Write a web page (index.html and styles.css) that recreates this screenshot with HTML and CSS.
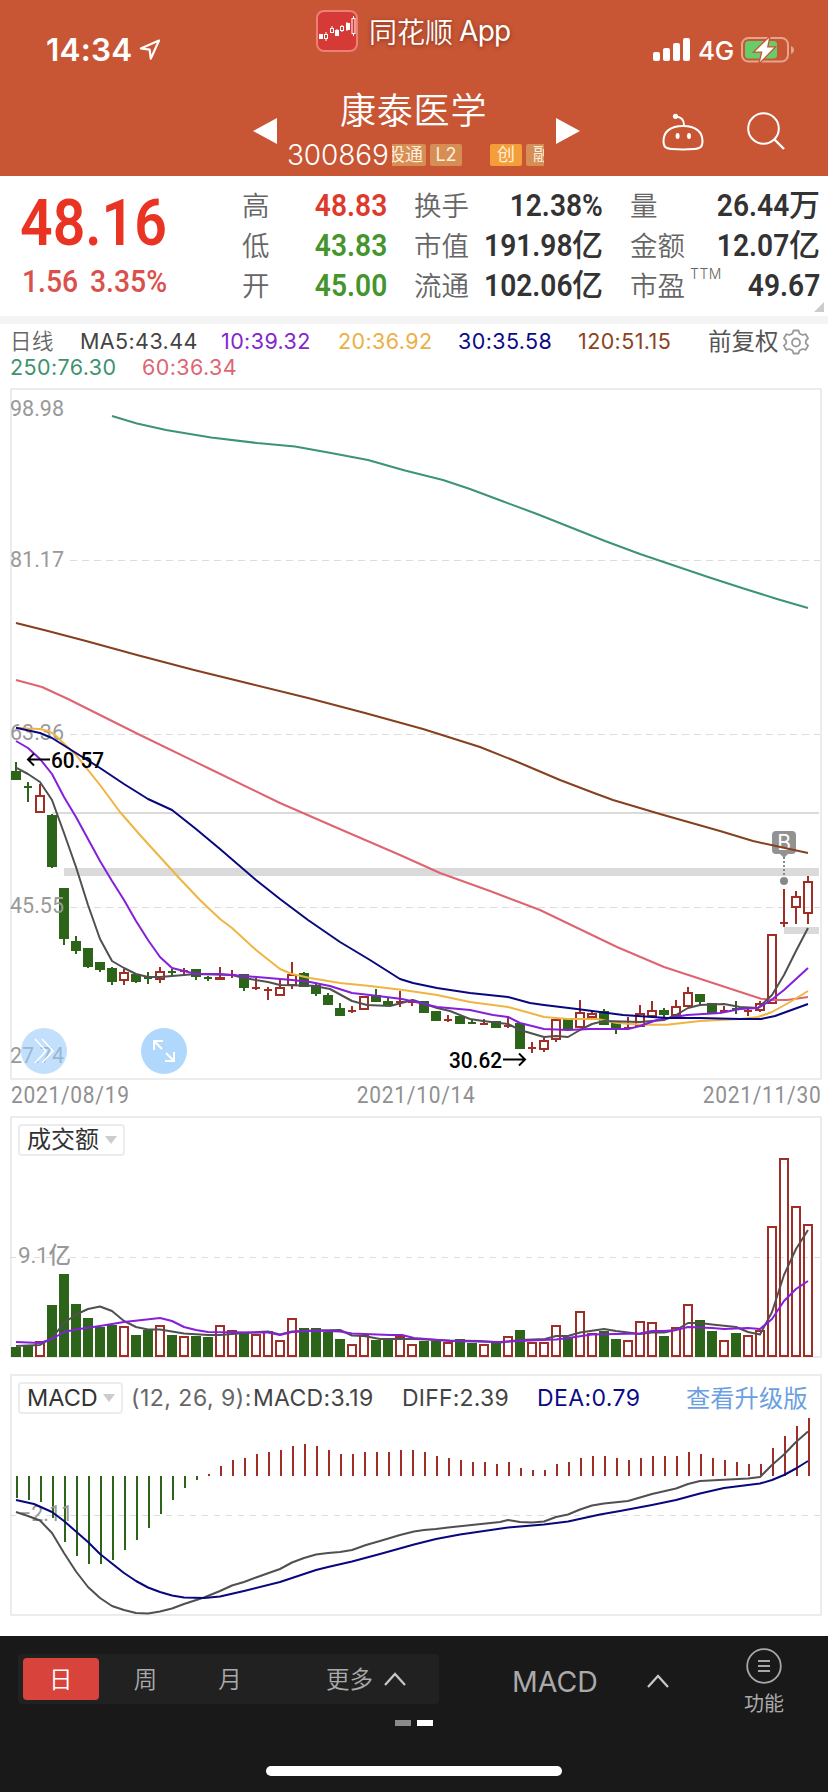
FILE: index.html
```html
<!DOCTYPE html>
<html lang="zh-CN">
<head>
<meta charset="utf-8">
<title>康泰医学 300869</title>
<link rel="stylesheet" href="styles.css">
</head>
<body>
<div class="screen">
  <header class="header">
    <div class="status">
      <div class="clock">14:34
        <svg class="locate" viewBox="0 0 22 22" width="22" height="22"><path d="M20 1.5 1.8 9.4l8.8 1.2 1.2 9z" fill="none" stroke="#fff" stroke-width="2.2" stroke-linejoin="round"/></svg>
      </div>
      <div class="brand">
        <svg viewBox="0 0 42 42" width="42" height="42">
          <rect x="1" y="1" width="40" height="40" rx="7" fill="#d63a36" stroke="#ec7f76" stroke-width="2"/>
          <g stroke="#fff" stroke-width="1" fill="#fff">
            <rect x="3.5" y="24.500" width="3" height="4"/>
            <path d="M10 22v9M16 16v7M26 15v7M31 12v9M37.500 6v20M21 19v7"/>
            <rect x="8.500" y="24.500" width="3" height="4" fill="#d63a36"/>
            <rect x="14.500" y="18.500" width="3" height="4" fill="#d63a36"/>
            <rect x="19.500" y="20.500" width="3" height="5"/>
            <rect x="24.500" y="16.500" width="3" height="4" fill="#d63a36"/>
            <rect x="30.500" y="13.500" width="3" height="6"/>
            <rect x="36" y="8.500" width="3" height="15" fill="#d63a36"/>
          </g>
        </svg>
        <span class="brand-name">同花顺</span><span class="brand-app">App</span>
      </div>
      <div class="signals">
        <svg viewBox="0 0 38 24" width="38" height="24" fill="#fff"><rect y="14" width="7" height="9" rx="2"/><rect x="10" y="10" width="7" height="13" rx="2"/><rect x="20" y="5" width="7" height="18" rx="2"/><rect x="30" width="7" height="23" rx="2"/></svg>
        <span class="net">4G</span>
        <svg viewBox="0 0 54 26" width="54" height="26"><rect x="1" y="1" width="46" height="23.500" rx="6.500" fill="none" stroke="#e2a68f" stroke-width="2"/><path d="M50 9v8c4-1.500 4-6.500 0-8z" fill="#e2a68f"/><rect x="4" y="4" width="32" height="17.500" rx="3.500" fill="#66ce68"/><path d="M28 1 14 14.500h7.500L19 25 33 10.500h-7z" fill="#fff" stroke="#c85634" stroke-width="2.600" paint-order="stroke"/></svg>
      </div>
    </div>
    <div class="titlebar">
      <svg class="back" viewBox="0 0 24 42" width="24" height="42"><path d="M22 2 2 21l20 19" fill="none" stroke="#fff" stroke-width="2"/></svg>
      <svg class="prev" viewBox="0 0 24 26" width="24" height="26"><path d="M24 0v26L0 13z" fill="#fff"/></svg>
      <div class="stock">
        <div class="stock-name">康泰医学</div>
        <div class="stock-meta"><span class="code">300869</span>
          <div class="tags"><div class="tag tag-cut">股通</div><div class="tag">L2</div><div class="tag tag-hot">创</div><div class="tag tag-end">融</div></div>
        </div>
      </div>
      <svg class="next" viewBox="0 0 24 26" width="24" height="26"><path d="M0 0v26l24-13z" fill="#fff"/></svg>
      <svg class="robot" viewBox="0 0 42 38" width="42" height="38"><path d="M21 13c13 0 19.500 6 19.500 15 0 6-2 7.500-8 8-7 .6-16 .6-23 0-6-.5-8-2-8-8 0-9 6.500-15 19.500-15z" fill="none" stroke="#fff" stroke-width="2"/><path d="M22 12c0-6-3-8-8-8.500" fill="none" stroke="#fff" stroke-width="1.800"/><circle cx="13.500" cy="3.300" r="2.600" fill="#fff"/><ellipse cx="15.600" cy="23" rx="2" ry="3" fill="#fff"/><ellipse cx="27" cy="23" rx="2" ry="3" fill="#fff"/></svg>
      <svg class="search" viewBox="0 0 38 38" width="38" height="38"><circle cx="16.500" cy="16.500" r="15.300" fill="none" stroke="#fff" stroke-width="2"/><path d="m27.500 27.500 9.500 9.500" stroke="#fff" stroke-width="2.400"/></svg>
    </div>
  </header>

  <section class="quote">
    <div class="price-block">
      <div class="price"><span class="din-l">48.16</span></div>
      <div class="change"><span class="din-l">1.56</span><span class="din-l">3.35%</span></div>
    </div>
    <div class="facts">
      <span>高</span><b class="up"><i>48.83</i></b><span>换手</span><b><i>12.38%</i></b><span>量</span><b><i>26.44</i>万</b>
      <span>低</span><b class="down"><i>43.83</i></b><span>市值</span><b><i>191.98</i>亿</b><span>金额</span><b><i>12.07</i>亿</b>
      <span>开</span><b class="down"><i>45.00</i></b><span>流通</span><b><i>102.06</i>亿</b><span class="pe">市盈<sup>TTM</sup></span><b><i>49.67</i></b>
    </div>
    <div class="corner"></div>
  </section>

  <section class="ma">
    <div class="ma-row">
      <span class="c-day">日线</span><span class="c5">MA5:43.44</span><span class="c10">10:39.32</span><span class="c20">20:36.92</span><span class="c30">30:35.58</span><span class="c120">120:51.15</span><span class="adj">前复权</span>
      <svg viewBox="-13 -13 26 26" width="26" height="26"><path d="M-2.500-11.500h5l1 3 3 1.500 3.200-.8 2.400 4.200-2.300 2.300v2.600l2.300 2.300-2.400 4.200-3.200-.8-3 1.500-1 3h-5l-1-3-3-1.500-3.200.8-2.400-4.200 2.300-2.300v-2.600l-2.300-2.300 2.400-4.200 3.200.8 3-1.500z" fill="none" stroke="#999" stroke-width="1.800" stroke-linejoin="round"/><circle r="4" cy=".5" fill="none" stroke="#999" stroke-width="1.800"/></svg>
    </div>
    <div class="ma-row ma-row2"><span class="c250">250:76.30</span><span class="c60">60:36.34</span></div>
  </section>

  <svg class="plot" id="kline" viewBox="0 388 828 692" width="828" height="692">
    <rect x="11" y="389" width="810" height="690" fill="none" stroke="#ececec" stroke-width="2"/>
    <path d="M70 560.500H820M70 734.500H820M70 907.500H820" stroke="#ddd" stroke-width="1.200" stroke-dasharray="7 5"/>
    <g fill="#dadada"><rect x="52" y="812" width="767" height="2"/><rect x="64" y="868" width="755" height="8"/><rect x="784" y="927" width="35" height="7"/></g>
    <g class="bars"></g>
    <g class="axis">
      <text x="10" y="416" textLength="54" lengthAdjust="spacingAndGlyphs">98.98</text>
      <text x="10" y="567" textLength="54" lengthAdjust="spacingAndGlyphs">81.17</text>
      <text x="10" y="740" textLength="54" lengthAdjust="spacingAndGlyphs">63.36</text>
      <text x="10" y="913" textLength="54" lengthAdjust="spacingAndGlyphs">45.55</text>
      <text x="10" y="1063" textLength="54" lengthAdjust="spacingAndGlyphs">27.74</text>
    </g>
    <g><path d="M776 831h16a4 4 0 0 1 4 4v15a4 4 0 0 1-4 4h-4l-4 4-4-4h-4a4 4 0 0 1-4-4v-15a4 4 0 0 1 4-4z" fill="#929292"/><text class="mark" x="784" y="850">B</text><path d="M784 857v20" stroke="#888" stroke-width="2" stroke-dasharray="2 2"/><circle cx="784" cy="881" r="4" fill="#888"/></g>
    <g class="lines"></g>
    <g class="note">
      <text x="51" y="768" textLength="53" lengthAdjust="spacingAndGlyphs">60.57</text><path d="M50 759.500H28M34 753.500l-6 6 6 6"/>
      <text x="449" y="1068" textLength="53" lengthAdjust="spacingAndGlyphs">30.62</text><path d="M503 1059.500h22M519 1053.500l6 6-6 6"/>
    </g>
    <circle cx="44" cy="1051" r="23" fill="#9accfa" opacity=".6"/>
    <path d="m35 1039 11 12-11 12M42 1039l11 12-11 12" fill="none" stroke="#fff" stroke-width="1.500"/>
    <circle cx="164" cy="1051" r="23" fill="#b0d8fc"/>
    <path d="M154 1050v-9h9M154 1041l8 8M174 1052v9h-9M174 1061l-8-8" fill="none" stroke="#fff" stroke-width="2"/>
  </svg>
  <div class="dates"><span>2021/08/19</span><span>2021/10/14</span><span>2021/11/30</span></div>

  <section class="panel volume">
    <svg class="plot" id="volume" viewBox="0 1116 828 242" width="828" height="242">
      <rect x="11" y="1117" width="810" height="240" fill="none" stroke="#ececec" stroke-width="2"/>
      <path d="M10 1257.500H820" stroke="#ddd" stroke-width="1.200" stroke-dasharray="6 6"/>
      <g class="bars"></g>
      <text class="axis" x="18" y="1263" textLength="53">9.1亿</text>
      <g class="lines"></g>
    </svg>
    <div class="panel-head"><span class="pick">成交额<i></i></span></div>
  </section>

  <section class="panel macd">
    <svg class="plot" id="macd" viewBox="0 1374 828 242" width="828" height="242">
      <rect x="11" y="1375" width="810" height="240" fill="none" stroke="#ececec" stroke-width="2"/>
      <path d="M10 1515.500H820" stroke="#ddd" stroke-width="1.200" stroke-dasharray="6 6"/>
      <g class="bars"></g>
      <text class="axis" x="19" y="1521" textLength="54" lengthAdjust="spacingAndGlyphs">−2.11</text>
      <g class="lines"></g>
    </svg>
    <div class="panel-head"><span class="pick pick-en">MACD<i></i></span><span class="args">(12, 26, 9):</span><span class="m1">MACD:3.19</span><span class="m2">DIFF:2.39</span><span class="m3">DEA:0.79</span><a class="upgrade">查看升级版</a></div>
  </section>

  <footer class="footer">
    <div class="tools">
      <div class="periods">
        <span class="on">日</span><span>周</span><span>月</span><span class="more">更多<svg viewBox="0 0 22 14" width="22" height="14"><path d="M1 13 11 2l10 11" fill="none" stroke="#c8c8c8" stroke-width="2.200"/></svg></span>
      </div>
      <div class="indicator"><span>MACD</span><svg viewBox="0 0 22 14" width="22" height="14"><path d="M1 13 11 2l10 11" fill="none" stroke="#c8c8c8" stroke-width="2.200"/></svg></div>
      <div class="func"><svg viewBox="0 0 36 36" width="36" height="36"><circle cx="18" cy="18" r="16.800" fill="none" stroke="#a8a8a8" stroke-width="1.800"/><path d="M12 13h12M12 18h12M12 23h12" stroke="#a8a8a8" stroke-width="1.800"/></svg><span>功能</span></div>
    </div>
    <div class="pager"><i></i><i class="cur"></i></div>
    <div class="home"></div>
  </footer>
</div>
<script src="charts.js"></script>
</body>
</html>
```

FILE: styles.css
```css
* { box-sizing: border-box; }
body { margin: 0; background: #fff; font-family: Inter, "Noto Sans CJK SC", sans-serif; color: #333; }
svg { display: block; flex: none; }
i { font-style: normal; }
.screen { width: 828px; height: 1792px; display: flex; flex-direction: column; overflow: hidden; }

.header { height: 176px; background: #c85634; color: #fff; flex: none; }
.status { height: 84px; display: grid; grid-template-columns: 316px 1fr 175px; }
.clock { display: flex; align-items: center; gap: 7px; padding: 15px 0 0 46px; font-size: 31.5px; font-weight: 600; letter-spacing: .2px; }
.brand { display: flex; align-items: center; height: 42px; margin-top: 10px; }
.brand-name { margin-left: 11px; font-size: 28px; font-weight: 350; text-shadow: 0 1px 4px rgba(60, 10, 0, .5); }
.brand-app { margin-left: 6px; font-size: 28px; letter-spacing: -.7px; text-shadow: 0 1px 4px rgba(60, 10, 0, .5); }
.signals { display: flex; align-items: center; height: 26px; margin-top: 37px; }
.net { width: 50px; padding-left: 7px; font-size: 26px; letter-spacing: -.3px; font-weight: 450; }
.titlebar { height: 92px; display: grid; grid-template-columns: 44px 209px 34px 257px 12px 24px 82px 42px 43px 38px; }
.back { grid-column: 2; margin-top: 26px; }
.titlebar > svg { align-self: start; }
.prev { grid-column: 2; grid-row: 1; justify-self: end; margin: 34px -24px 0 0; }
.stock { grid-column: 4; grid-row: 1; }
.stock-name { padding-left: 53px; height: 56px; line-height: 54px; font-size: 36px; font-weight: 350; letter-spacing: .8px; white-space: nowrap; }
.stock-meta { display: flex; align-items: center; height: 30px; }
.code { width: 105px; font-size: 28px; font-weight: 350; letter-spacing: -.1px; line-height: 30px; }
.tags { width: 152px; height: 22px; display: flex; overflow: hidden; }
.tag { flex: none; width: 32px; height: 22px; line-height: 22px; margin-right: 4px; border-radius: 2px; background: #d68e54; color: #fdeedd; font-size: 18px; text-align: center; }
.tag-cut { width: 42px; margin-left: -8px; }
.tag-hot { margin-left: 24px; background: #f49e3a; }
.next { grid-column: 6; grid-row: 1; margin-top: 34px; }
.robot { grid-column: 8; grid-row: 1; margin-top: 29px; }
.search { grid-column: 10; grid-row: 1; margin-top: 28px; }

.quote { position: relative; flex: none; height: 148px; display: grid; grid-template-columns: 242px 1fr; border-bottom: 8px solid #f4f4f4; }
.price-block { font-family: Roboto, sans-serif; color: #e93323; white-space: nowrap; }
.din-l { display: inline-block; transform: scaleX(.88); transform-origin: left; }
.price { padding: 9px 0 0 20px; height: 84px; line-height: 77px; font-size: 65px; font-weight: 600; }
.change { display: grid; grid-template-columns: 68px 90px; padding-left: 22px; height: 44px; line-height: 43px; font-size: 30.5px; font-weight: 500; color: #da504b; }
.change .din-l { transform: scaleX(.93); }
.facts { display: grid; grid-template-columns: 54px 91px 27px 62px 127px 27px 92px 98px; grid-template-rows: repeat(3, 40px); padding-top: 10px; line-height: 40px; }
.facts span { font-size: 27.5px; font-weight: 350; color: #666; white-space: nowrap; }
.facts span:nth-of-type(3n+2) { grid-column: 4; }
.facts span:nth-of-type(3n) { grid-column: 7; }
.facts span:nth-of-type(3n+1) { grid-column: 1; }
.facts b { display: flex; justify-content: flex-end; font-size: 31px; font-weight: 500; color: #333; white-space: nowrap; line-height: 38px; }
.facts i { font-family: Roboto, sans-serif; font-weight: 600; font-size: 32px; line-height: 39px; transform: scaleX(.88); transform-origin: right; }
.facts .up { color: #dd3a2c; }
.facts .down { color: #45942c; }
.pe sup { font-size: 14px; line-height: 0; letter-spacing: .5px; vertical-align: 17px; margin-left: 5px; }
.corner { position: absolute; right: 4px; bottom: 4px; border-left: 10px solid transparent; border-bottom: 10px solid #ccc; }

.ma { flex: none; height: 64px; padding-top: 4px; font-size: 21.5px; letter-spacing: .4px; }
.ma-row { display: grid; grid-template-columns: 70px 141px 117px 120px 120px 130px 75px 26px; height: 27px; line-height: 27px; padding-left: 10px; align-items: center; white-space: nowrap; }
.ma-row2 { grid-template-columns: 132px 120px; height: 24px; line-height: 22px; }
.c-day { color: #666; font-weight: 350; }
.c5 { color: #444; }
.c10 { color: #8326cc; }
.c20 { color: #ebb045; }
.c30 { color: #0b0b86; }
.c120 { color: #8b4420; }
.c250 { color: #3f9271; }
.c60 { color: #dd6673; }
.adj { color: #555; font-size: 23.5px; letter-spacing: 0; }

.plot { flex: none; }
.axis { font: 450 22.5px Roboto, "Noto Sans CJK SC", sans-serif; fill: #999; }
.mark { font: 21px Inter, sans-serif; fill: #fff; text-anchor: middle; }
.note { font: 500 22px Roboto, sans-serif; fill: #000; }
.note path { fill: none; stroke: #000; stroke-width: 2; }
.dates { flex: none; height: 36px; display: flex; justify-content: space-between; padding: 0 7px 0 11px; font: 23px/32px Roboto, sans-serif; letter-spacing: .8px; color: #909090; }
.dates span { transform: scaleX(.91); }
.dates span:first-child { transform-origin: left; }
.dates span:last-child { transform-origin: right; }

.panel { flex: none; display: grid; height: 242px; }
.panel > * { grid-area: 1 / 1; }
.macd { margin-top: 16px; }
.panel-head { display: flex; align-items: center; height: 32px; margin: 8px 0 0 18px; font-size: 23px; line-height: 30px; white-space: nowrap; }
.pick { display: flex; align-items: center; justify-content: space-between; width: 107px; height: 32px; padding: 0 6px 0 7px; border: 2px solid #ececec; border-radius: 4px; font-size: 24px; line-height: 26px; color: #333; }
.pick-en { width: 105px; font-size: 23.5px; line-height: 28px; }
.pick i { border: 6px solid transparent; border-top: 8px solid #ccc; border-bottom: 0; }
.args { width: 122px; margin-left: 8px; color: #666; letter-spacing: .5px; }
.m1 { width: 149px; color: #444; letter-spacing: .3px; }
.m2 { width: 135px; color: #444; letter-spacing: .2px; }
.m3 { width: 149px; color: #0b0b86; letter-spacing: .4px; }
.upgrade { color: #6c9fe2; font-size: 24.3px; }

.footer { margin-top: 20px; flex: 1; background: #191919; color: #aaa; }
.tools { display: flex; height: 84px; }
.periods { width: 421px; height: 50px; margin: 18px 0 0 18px; padding: 4px 5px; border-radius: 4px; background: #212121; display: flex; font-size: 23.5px; font-weight: 350; line-height: 43px; text-align: center; }
.periods span { width: 77px; height: 42px; margin-right: 9px; }
.periods .on { background: #d8433c; color: #fff; border-radius: 4px; }
.periods .more { display: flex; align-items: center; gap: 11px; width: 110px; margin: 0 0 0 49px; }
.indicator { display: flex; align-items: center; height: 50px; margin: 20px 0 0 73px; font-size: 28.5px; }
.indicator span { width: 135px; }
.func { width: 60px; margin: 12px 0 0 65px; display: flex; flex-direction: column; align-items: center; font-size: 20px; line-height: 40px; }
.pager { display: flex; justify-content: center; gap: 6px; }
.pager i { width: 16px; height: 6px; background: #8a8a8a; }
.pager .cur { background: #fff; }
.home { width: 296px; height: 10px; margin: 40px auto 0; border-radius: 5px; background: #fff; }
```

FILE: charts.js
```js
const UP = '#9f2f26', DOWN = '#2c651a';
const GREY = '#505050', PURPLE = '#861fdc', NAVY = '#08087e';
const cx = i => 16 + 12 * i;

// direction, high, body top, body bottom, low, turnover top
const days = `
d 762 771 780 780 1347;d 782 786 788 802 1346;u 784 795 813 813 1341;d 814 815 867 868 1305;
d 888 888 939 945 1274;d 936 941 951 954 1304;d 948 948 967 968 1318;d 962 962 970 972 1327;
d 967 968 982 985 1325;u 969 972 981 985 1326;d 974 974 982 983 1335;d 972 977 979 984 1330;
u 967 971 980 983 1325;d 969 971 973 977 1335;u 968 970 972 974 1336;d 969 969 977 980 1336;
d 976 977 979 981 1337;u 967 977 980 980 1325;u 970 974 976 978 1330;d 974 974 988 991 1333;
u 978 987 989 990 1334;u 987 989 991 1000 1331;u 980 987 996 996 1340;u 962 974 986 989 1318;
d 972 973 987 987 1328;d 984 985 994 996 1328;d 993 995 1005 1005 1332;d 1003 1008 1016 1016 1339;
u 1006 1010 1012 1013 1344;u 996 996 1010 1010 1335;d 989 995 1002 1002 1340;d 997 1001 1006 1006 1338;
u 991 1001 1003 1007 1336;u 999 1001 1003 1006 1344;d 1001 1001 1013 1013 1341;d 1011 1011 1021 1021 1341;
u 1015 1019 1021 1022 1342;d 1016 1016 1024 1024 1339;d 1019 1022 1024 1024 1343;u 1019 1023 1025 1025 1344;
d 1021 1021 1028 1028 1343;u 1016 1025 1027 1028 1336;d 1023 1023 1049 1049 1330;u 1042 1047 1049 1053 1342;
u 1038 1040 1050 1052 1342;u 1017 1019 1040 1042 1325;d 1018 1019 1029 1031 1337;u 1000 1012 1028 1028 1311;
u 1011 1013 1018 1018 1333;d 1009 1011 1025 1025 1331;d 1022 1022 1028 1034 1339;u 1017 1027 1029 1030 1340;
u 1005 1013 1027 1027 1321;u 1001 1010 1017 1017 1322;d 1008 1010 1015 1017 1336;u 1000 1006 1016 1016 1327;
u 987 992 1007 1007 1304;d 994 994 1002 1005 1320;d 1003 1003 1013 1013 1331;u 1006 1010 1012 1012 1340;
d 1001 1008 1010 1014 1333;u 1008 1010 1012 1016 1335;u 1001 1003 1011 1012 1330;u 934 934 1004 1004 1226;
u 889 922 924 927 1158;u 891 896 908 924 1206;u 876 881 914 924 1224`
  .trim().split(';').map(s => s.trim().split(' ')).map(([d, ...n]) => [d, ...n.map(Number)]);

const macd = [1498,1500,1502,1518,1542,1556,1564,1564,1560,1550,1540,1528,1514,1500,1488,1480,
  1474,1466,1460,1458,1454,1452,1450,1446,1444,1446,1450,1454,1454,1452,1452,1452,1450,1450,
  1452,1456,1458,1460,1462,1462,1464,1462,1468,1470,1470,1464,1462,1458,1456,1456,1458,1460,
  1458,1456,1456,1456,1452,1454,1458,1460,1462,1464,1464,1448,1436,1426,1418];

const lines = {
  kline: [
    ['#3c9474', '112,416 137,423.500 166,430 211,437.500 257,443 295,446.500 331,453 368,460 405,470.500 443,480 470,489 502,501 537,514 571,527.500 605,541 640,554 674,565.500 708,577 742,588 777,599 808,608'],
    ['#de6470', '16,680 42,687 68,699 138,734 208,768 280,803 342,830 400,855 440,873 490,891 540,910 617,947 664,967 761,998.700 773,1000 787,1000 808,997'],
    ['#f0b443', '16,727.700 28,728.500 40,729 50,731.500 56,736 76,755 100,785 120,812 140,835 180,879 200,900 220,919 232,928 256,950 280,969 292,974 310,978 340,983 370,986 403,990 437,995 470,1002 508,1007 530,1013 544,1017 568,1019 597,1019 617,1023 643,1024.700 667,1024.700 700,1021 740,1019 758,1017 772,1012 790,1002 808,991'],
    [GREY, '16,767.700 28,774 40,782 52,800 64,833 76,867 88,905 100,939 112,961 124,968 136,974 148,977 160,977 172,976 196,974 232,975 244,978 268,982 280,985 313,985.700 330,989 352,1001 367,1005 390,1006 413,1000 437,1008 450,1011 470,1019 483,1021 508,1024 520,1030 544,1037 556,1036 568,1037 580,1030 592,1024 604,1021 640,1022 664,1020 676,1015 688,1008 700,1005 724,1004 740,1007 758,1008 772,995 784,975 796,951 808,928'],
    [PURPLE, '16,741 28,748 40,759 52,774 64,797 76,817 88,839 100,861 112,881 124,900 136,921 148,940 160,957 172,968 184,971 196,974 220,974 244,976 280,979 292,980 310,982 330,986 352,993 370,995 402,999 420,1003 437,1007 470,1010 493,1015 508,1017 520,1023 544,1029 568,1030 590,1029 628,1029 640,1026 657,1020 687,1015 720,1013 740,1009 758,1008 770,1001 784,990 808,968'],
    [NAVY, '16,727.700 40,733 52,738 76,753 100,768 124,784 148,799 172,810 196,829 220,849 256,880 280,899 308,920 340,942 370,960 400,979 413,983 437,988 470,993 508,997 530,1003 544,1005 577,1009 623,1015 667,1018 700,1018 740,1019 761,1019 775,1016 808,1004'],
    ['#86401e', '16,623 46,630.500 86,641 137,655 194,670 251,684 308,698 365,713 423,729 480,747 520,763 560,780 594,793 613,800 660,814 720,831 753,841 808,853']
  ],
  volume: [
    [GREY, '16,1346 40,1345 52,1338 64,1323 76,1314.500 88,1309 100,1306.500 112,1311 124,1321 136,1327 148,1329.500 160,1329.500 184,1333.500 208,1335 220,1335 244,1333 268,1331.500 280,1334.500 292,1331.500 316,1330.500 340,1330 352,1335.500 364,1336 380,1339 400,1339 414,1339 450,1340.500 480,1341 500,1342.500 520,1340 545,1339 556,1336 568,1336 580,1332.500 604,1329 616,1331 640,1334 652,1332.500 664,1332.500 676,1330 688,1323 700,1323 712,1324.500 736,1327 748,1332 760,1334.500 772,1312 784,1275 796,1249 808,1230'],
    [PURPLE, '16,1342 40,1343 52,1339 64,1332 76,1329.500 100,1326 124,1322 160,1318 172,1321 184,1327 196,1330 208,1332 268,1332.500 280,1335 292,1332 316,1330.500 340,1331.500 352,1333.500 390,1335 402,1335 414,1338 450,1341 500,1342 530,1340.500 556,1339.500 568,1338 592,1334.500 640,1333.500 652,1331 664,1331 676,1330 688,1327 712,1328 724,1329 748,1328 760,1329 772,1319 784,1301 796,1289 808,1281']
  ],
  macd: [
    [GREY, '16,1512 28,1516 40,1520.500 52,1533 64,1553 76,1571.500 88,1587 100,1598 112,1606 124,1610 136,1613 148,1613.500 160,1611.500 172,1608.500 184,1604 204,1597.500 220,1591 232,1585.500 244,1582 256,1577.500 280,1569 292,1562.500 304,1558 316,1554.500 328,1553 340,1552 352,1550 366,1545 380,1541 400,1535 414,1531.500 424,1530 436,1529 448,1527.500 500,1522 508,1520 520,1522 532,1522.500 544,1521.500 556,1517 568,1514.500 580,1509.500 592,1505.500 604,1503.500 628,1501 652,1494 676,1488.500 688,1484 700,1481 748,1478.500 760,1477 772,1465 784,1454.500 796,1442 808,1431.500'],
    [NAVY, '16,1500 34,1504 52,1512 64,1521 76,1531.500 88,1542 100,1554 112,1563.500 124,1573 136,1581 148,1587.500 160,1592 172,1595.500 184,1597.500 204,1598 220,1596.500 244,1591 280,1582 316,1570 328,1567 352,1561.500 380,1554 414,1544.500 436,1539 460,1534.500 508,1527.500 544,1524.500 568,1521.500 600,1514.500 620,1511 652,1505 676,1500 700,1493.500 724,1488 760,1483.500 772,1480 784,1475 796,1468.500 808,1461']
  ]
};

function box(i, dir, top, bottom) {
  const x = cx(i) - 5, h = bottom - top;
  if (dir === 'd' || h <= 3) {
    const thin = h <= 2 ? 1 : 0;
    return `<rect x="${x + thin}" y="${top}" width="${10 - 2 * thin}" height="${h}" fill="${dir === 'd' ? DOWN : UP}"/>`;
  }
  return `<rect x="${x + 1}" y="${top + 1}" width="8" height="${h - 2}" fill="none" stroke="${UP}" stroke-width="2"/>`;
}
function wick(i, dir, a, b) {
  return b > a ? `<rect x="${cx(i) - 1}" y="${a}" width="2" height="${b - a}" fill="${dir === 'd' ? DOWN : UP}"/>` : '';
}
const bars = {
  kline: days.map(([d, hi, top, bot, lo], i) => wick(i, d, hi, top) + wick(i, d, bot, lo) + box(i, d, top, bot)).join(''),
  volume: days.map(([d, , , , , v], i) => box(i, d, v, 1357)).join(''),
  macd: macd.map((y, i) => `<rect x="${cx(i)}" y="${Math.min(y, 1476)}" width="2" height="${Math.abs(y - 1476)}" fill="${y > 1476 ? DOWN : UP}"/>`).join('')
};
for (const id of Object.keys(lines)) {
  document.querySelector(`#${id} .bars`).innerHTML = bars[id];
  document.querySelector(`#${id} .lines`).innerHTML =
    lines[id].map(([c, p]) => `<polyline points="${p}" fill="none" stroke="${c}" stroke-width="2" stroke-linejoin="round"/>`).join('');
}
```
